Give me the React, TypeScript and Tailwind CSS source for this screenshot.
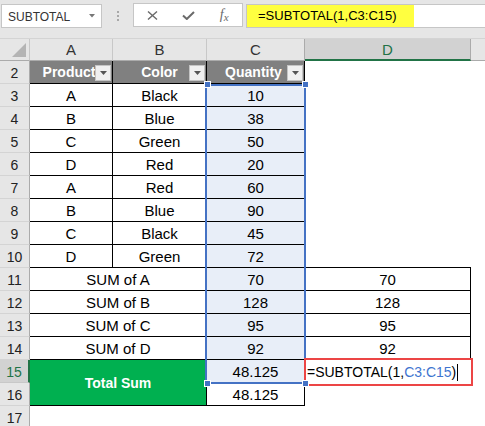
import React from "react";

const data: [string, string, number][] = [
  ["A", "Black", 10],
  ["B", "Blue", 38],
  ["C", "Green", 50],
  ["D", "Red", 20],
  ["A", "Red", 60],
  ["B", "Blue", 90],
  ["C", "Black", 45],
  ["D", "Green", 72],
];

const sums: [string, number][] = [
  ["SUM of A", 70],
  ["SUM of B", 128],
  ["SUM of C", 95],
  ["SUM of D", 92],
];

function RowHead({ n, sel = false }: { n: number; sel?: boolean }) {
  if (sel) {
    return (
      <div className="flex items-center justify-center bg-[#d2d2d2] border-b border-b-[#c8c8c8] border-r-2 border-r-[#217346] text-[14px] text-[#217346] pt-[2px]">
        {n}
      </div>
    );
  }
  return (
    <div className="flex items-center justify-center bg-[#e6e6e6] border-b border-r border-b-[#d4d4d4] border-r-[#ababab] text-[14px] text-[#222] pt-[2px]">
      {n}
    </div>
  );
}

function FilterBtn() {
  return (
    <span className="absolute right-px top-[4px] w-4 h-4 bg-[#f0f0f0] border border-[#c4c4c4] flex items-center justify-center">
      <svg width="7" height="4" viewBox="0 0 7 4">
        <path d="M0 0h7L3.5 4z" fill="#555" />
      </svg>
    </span>
  );
}

function Empty() {
  return <div className="bg-white" />;
}

export default function App() {
  return (
    <div className="w-[485px] h-[426px] overflow-hidden bg-white font-['Liberation_Sans',Arial,sans-serif]">
      {/* Formula bar area */}
      <div className="h-[39px] bg-[#e6e6e6] flex items-start pt-[4px] border-b border-[#d4d4d4]">
        <div className="ml-px w-[101px] h-[24px] bg-white border border-[#c6c6c6] flex items-center justify-between pl-[6px] pr-[6px]">
          <span className="text-[12px] text-[#333] pt-px">SUBTOTAL</span>
          <svg width="6" height="4" viewBox="0 0 6 4">
            <path d="M0 0h6L3 3.5z" fill="#777" />
          </svg>
        </div>
        <div className="w-[31px] h-[24px] flex flex-col items-center justify-center gap-[2px] pl-[1px]">
          <span className="w-[2px] h-[2px] bg-[#a8a8a8]" />
          <span className="w-[2px] h-[2px] bg-[#a8a8a8]" />
          <span className="w-[2px] h-[2px] bg-[#a8a8a8]" />
        </div>
        <div className="w-[110px] h-[24px] -mt-px bg-white border border-[#c6c6c6] flex items-center pl-px">
          <div className="w-[36px] flex items-center justify-center">
            <svg width="11" height="9" viewBox="0 0 11 9">
              <path d="M1 0.5L10 8.5M10 0.5L1 8.5" stroke="#6a6a6a" strokeWidth="1.4" />
            </svg>
          </div>
          <div className="w-[36px] flex items-center justify-center">
            <svg width="13" height="9" viewBox="0 0 13 9">
              <path d="M1 4.5L4.8 8L12 1" stroke="#6a6a6a" strokeWidth="2" fill="none" />
            </svg>
          </div>
          <div className="w-[36px] flex items-center justify-center text-[#6a6a6a] font-['Liberation_Serif',serif] italic">
            <span className="text-[14px] leading-none">f</span>
            <span className="text-[11px] leading-none mt-[4px]">x</span>
          </div>
        </div>
        <div className="ml-[3px] flex-1 h-[24px] bg-white border border-r-0 border-[#c6c6c6] p-0">
          <div className="w-[167px] h-full bg-[#ffff40] flex items-center pl-[11px] text-[13px] text-black">
            =SUBTOTAL(1,C3:C15)
          </div>
        </div>
      </div>

      {/* Sheet grid */}
      <div className="grid grid-cols-[30px_83px_94px_98px_166px_1fr] grid-rows-[22px_repeat(16,23px)] text-black">
        {/* Column headers */}
        <div className="relative bg-[#e6e6e6] border-r border-b border-r-[#c8c8c8] border-b-[#ababab]">
          <svg className="absolute right-[3px] bottom-[3px]" width="14" height="14" viewBox="0 0 14 14">
            <path d="M14 0V14H0z" fill="#b4b4b4" />
          </svg>
        </div>
        <div className="flex items-center justify-center bg-[#e6e6e6] border-r border-b border-r-[#c8c8c8] border-b-[#ababab] text-[15px] text-[#333] pt-[2px]">A</div>
        <div className="flex items-center justify-center bg-[#e6e6e6] border-r border-b border-r-[#c8c8c8] border-b-[#ababab] text-[15px] text-[#333] pt-[2px]">B</div>
        <div className="flex items-center justify-center bg-[#e6e6e6] border-r border-b border-r-[#ababab] border-b-[#ababab] text-[15px] text-[#333] pt-[2px]">C</div>
        <div className="flex items-center justify-center bg-[#d2d2d2] border-r border-b-2 border-r-[#ababab] border-b-[#217346] text-[15px] text-[#217346] pt-[3px]">D</div>
        <div className="bg-[#e6e6e6] border-b border-b-[#ababab]" />

        {/* Row 2: table header */}
        <RowHead n={2} />
        <div className="relative flex items-center justify-center bg-[#808080] border-r border-b border-black text-white font-bold text-[14px] pt-px pr-[4px]">
          Product
          <FilterBtn />
        </div>
        <div className="relative flex items-center justify-center bg-[#808080] border-r border-b border-black text-white font-bold text-[14px] pt-px">
          Color
          <FilterBtn />
        </div>
        <div className="relative flex items-center justify-center bg-[#808080] border-r border-b border-black text-white font-bold text-[14px] pt-px pr-[4px]">
          Quantity
          <FilterBtn />
        </div>
        <Empty />
        <Empty />

        {/* Rows 3-10 */}
        {data.map(([p, c, q], i) => (
          <React.Fragment key={i}>
            <RowHead n={i + 3} />
            <div className="flex items-center justify-center border-r border-b border-black text-[15px] pt-[2px]">{p}</div>
            <div className="flex items-center justify-center border-r border-b border-black text-[15px] pt-[2px]">{c}</div>
            <div className="relative flex items-center justify-center bg-[#e8eef8] border-r border-b border-black text-[15px] pt-[2px]">
              {q}
              {i === 0 && (
                <>
                  <div className="absolute left-[-2px] top-0 w-[101px] h-[300px] border-2 border-[#4472c4] z-10 pointer-events-none" />
                  <span className="absolute left-[-3px] top-[-3px] w-[7px] h-[7px] bg-[#4472c4] border border-white z-20" />
                  <span className="absolute left-[95px] top-[-3px] w-[7px] h-[7px] bg-[#4472c4] border border-white z-20" />
                  <span className="absolute left-[-3px] top-[296px] w-[7px] h-[7px] bg-[#4472c4] border border-white z-20" />
                  <span className="absolute left-[95px] top-[296px] w-[7px] h-[7px] bg-[#4472c4] border border-white z-20" />
                </>
              )}
            </div>
            {i === 7 ? <div className="border-b border-black" /> : <Empty />}
            <Empty />
          </React.Fragment>
        ))}

        {/* Rows 11-14 */}
        {sums.map(([label, v], i) => (
          <React.Fragment key={label}>
            <RowHead n={i + 11} />
            <div className="col-span-2 flex items-center justify-center border-r border-b border-black text-[15px] pt-[2px]">{label}</div>
            <div className="flex items-center justify-center bg-[#e8eef8] border-r border-b border-black text-[15px] pt-[2px]">{v}</div>
            <div className="flex items-center justify-center border-r border-b border-black text-[15px] pt-[2px]">{v}</div>
            <Empty />
          </React.Fragment>
        ))}

        {/* Row 15 */}
        <RowHead n={15} sel />
        <div className="col-span-2 row-span-2 flex items-center justify-center bg-[#00b050] border-r border-b border-black text-white font-bold text-[14px] pt-px">
          Total Sum
        </div>
        <div className="flex items-center justify-center bg-[#e8eef8] border-r border-b border-black text-[15px] pt-[2px]">48.125</div>
        <div className="relative flex items-center pl-[2px] text-[14px] pt-[2px]">
          <span>=SUBTOTAL(1,</span>
          <span className="text-[#3e75d0]">C3:C15</span>
          <span>)</span>
          <span className="inline-block w-px h-[17px] bg-black ml-[1px]" />
          <div className="absolute left-[-1px] right-[-2px] top-[-2px] bottom-[-3px] border-2 border-[#ec4545] z-10" />
        </div>
        <Empty />

        {/* Row 16 */}
        <RowHead n={16} />
        <div className="flex items-center justify-center border-r border-b border-black text-[15px] pt-[2px]">48.125</div>
        <Empty />
        <Empty />

        {/* Row 17 */}
        <RowHead n={17} />
        <div className="col-span-5 bg-white" />
      </div>
    </div>
  );
}
